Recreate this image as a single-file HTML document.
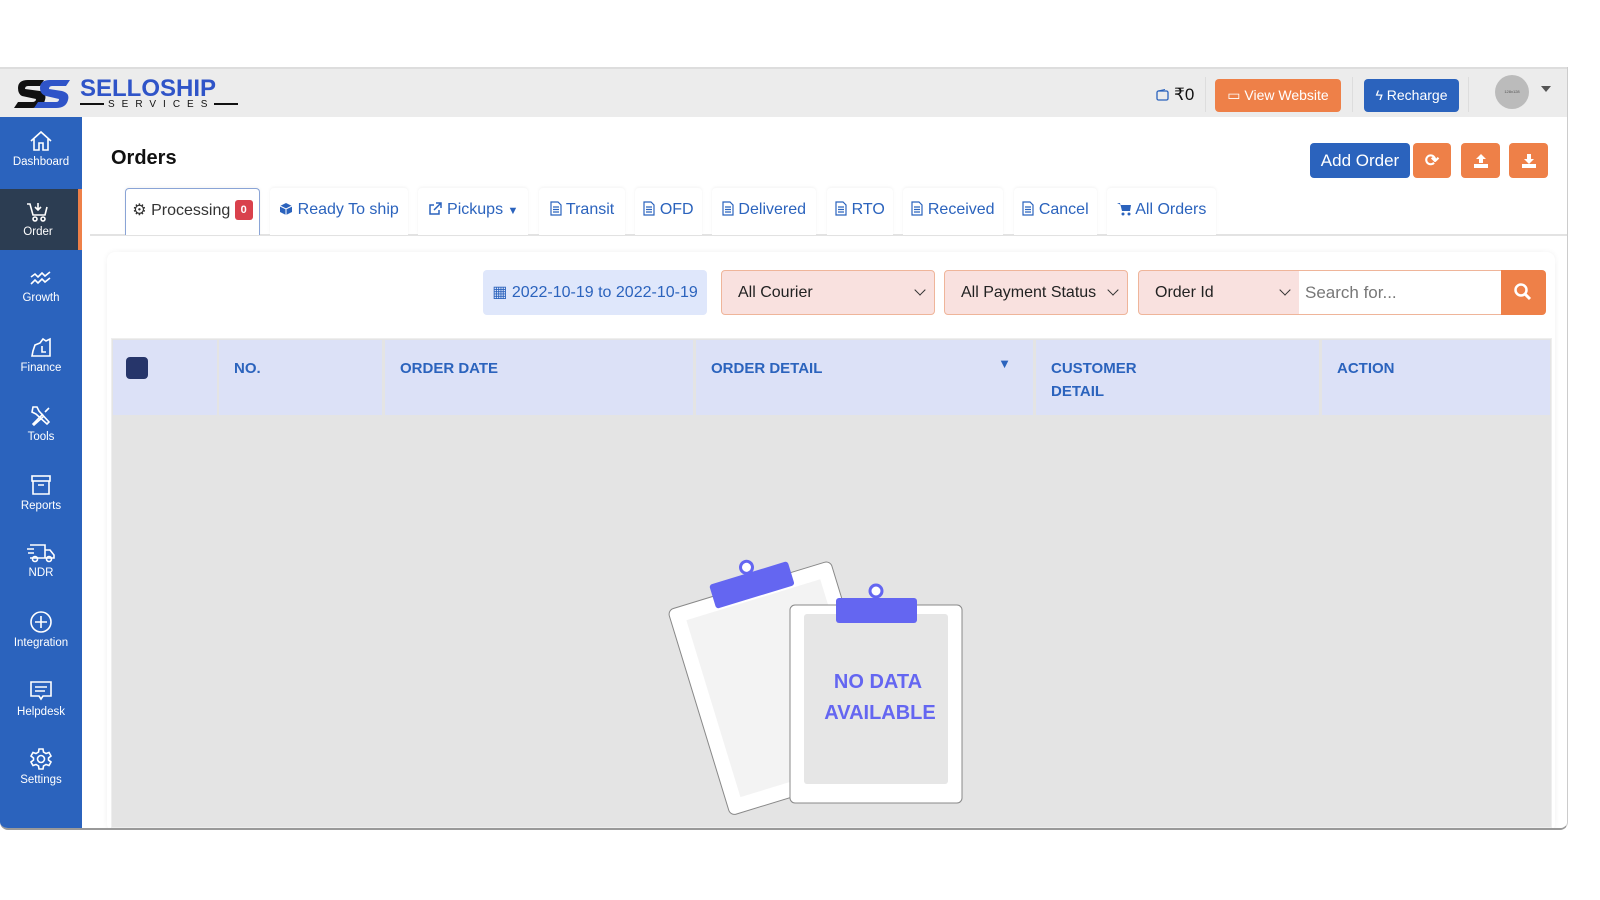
<!DOCTYPE html>
<html><head><meta charset="utf-8"><style>
*{box-sizing:border-box;margin:0;padding:0}
body{width:1600px;height:900px;background:#fff;font-family:"Liberation Sans",sans-serif;position:relative;overflow:hidden}
.app{position:absolute;left:0;top:67px;width:1568px;height:763px;background:#fff;border-bottom:2px solid #999;border-right:1px solid #ccc;border-radius:0 0 8px 8px;overflow:hidden}
.hdr{position:absolute;left:0;top:0;width:1568px;height:50px;background:#ececec;border-top:2px solid #ddd}
.side{position:absolute;left:0;top:50px;width:82px;height:713px;background:#2b63bd}
.si{position:absolute;left:0;width:82px;text-align:center;color:#fff;font-size:11.5px}
.si svg{display:block;margin:0 auto 3px}
.main{position:absolute;left:82px;top:50px;width:1486px;height:713px;background:#fff}
.tab{position:absolute;top:71px;height:47px;background:#fff;color:#2b63bd;font-size:16px;line-height:44px;text-align:center;border-radius:4px 4px 0 0;box-shadow:0 -1px 3px rgba(0,0,0,.05);white-space:nowrap}
.tab svg{vertical-align:-2px}
.btn{position:absolute;border-radius:4px;color:#fff;text-align:center}
.sel{position:absolute;top:270px;height:45px;background:#f9e1df;border:1px solid #efb59a;border-radius:4px;font-size:16px;line-height:43px;padding-left:16px;color:#222}
.sel:after{content:"";position:absolute;right:10px;top:15px;width:7px;height:7px;border-right:1.5px solid #333;border-bottom:1.5px solid #333;transform:rotate(45deg)}
.th{position:absolute;top:340px;height:75px;background:#dce1f7;color:#2b63bd;font-weight:bold;font-size:15px;padding:17px 0 0 15px;line-height:23px}
</style></head><body>
<svg width="0" height="0" style="position:absolute"><defs><symbol id="doc" viewBox="0 0 12 15"><path d="M1 1 H8 L11 4 V14 H1 Z M3 6 H9 M3 8.5 H9 M3 11 H9" fill="none" stroke="#2b63bd" stroke-width="1.2"/></symbol></defs></svg>
<div class="app">
 <div class="hdr">
  <svg style="position:absolute;left:14px;top:7px" width="58" height="36" viewBox="0 0 58 36"><path d="M4 12 Q4 4 14 4 L30 4 L26 10 L14 10 Q11 10 11 13 L26 15 Q33 17 31 24 Q29 32 18 32 L0 32 L4 26 L18 26 Q22 26 22 23 L8 20 Q4 18 4 12Z" fill="#111"/><path d="M26 12 Q26 4 36 4 L56 4 L52 10 L38 10 Q35 10 35 13 L48 15 Q56 17 54 24 Q52 32 42 32 L20 32 L24 26 L42 26 Q45 26 45 23 L32 20 Q26 18 26 12Z" fill="#2f54c8"/></svg>
  <div style="position:absolute;left:80px;top:6px;font:bold 24px 'Liberation Sans',sans-serif;color:#2f54c8">SELLOSHIP</div>
  <div style="position:absolute;left:80px;top:30px;font-size:10px;color:#111;letter-spacing:7px;white-space:nowrap"><span style="display:inline-block;width:24px;border-top:2px solid #111;vertical-align:middle;margin-right:4px"></span>SERVICES<span style="display:inline-block;width:24px;border-top:2px solid #111;vertical-align:middle"></span></div>
  <svg style="position:absolute;left:1156px;top:20px" width="13" height="12" viewBox="0 0 13 12"><rect x="1" y="2" width="11" height="9" rx="1.5" fill="none" stroke="#2b63bd" stroke-width="1.3"/><path d="M2 2 L9 0.5" stroke="#2b63bd"/></svg>
  <div style="position:absolute;left:1174px;top:16px;font-size:17px;color:#111">₹0</div>
  <div style="position:absolute;left:1205px;top:8px;height:35px;border-left:1px solid #ddd"></div>
  <div class="btn" style="left:1215px;top:10px;width:126px;height:33px;background:#ee8048;font-size:14px;line-height:33px">▭ View Website</div>
  <div style="position:absolute;left:1352px;top:8px;height:35px;border-left:1px solid #ddd"></div>
  <div class="btn" style="left:1364px;top:10px;width:95px;height:33px;background:#2b63bd;font-size:14px;line-height:33px">ϟ Recharge</div>
  <div style="position:absolute;left:1468px;top:8px;height:35px;border-left:1px solid #ddd"></div>
  <div style="position:absolute;left:1495px;top:6px;width:34px;height:34px;border-radius:50%;background:#bbb;font-size:4px;color:#555;text-align:center;line-height:34px">128x128</div>
  <div style="position:absolute;left:1541px;top:17px;border:5px solid transparent;border-top:6px solid #555"></div>
 </div>
 <div class="side">
  <div class="si" style="top:12px"><svg width="24" height="24" viewBox="0 0 24 24" fill="none" stroke="#fff" stroke-width="1.6"><path d="M2 12 L12 3 L22 12 M5 10 V21 H10 V14 H14 V21 H19 V10"/></svg>Dashboard</div>
  <div style="position:absolute;top:72px;left:0;width:82px;height:61px;background:#2c3d52;border-right:4px solid #ee8048"></div>
  <div class="si" style="top:84px;width:76px"><svg width="24" height="22" viewBox="0 0 24 22" fill="none" stroke="#fff" stroke-width="1.6"><path d="M1 3 H4 L7 14 H19 L21 6 M12 2 V9 M9 6 L12 9 L15 6"/><circle cx="9" cy="18" r="2"/><circle cx="17" cy="18" r="2"/></svg>Order</div>
  <div class="si" style="top:152px"><svg width="24" height="20" viewBox="0 0 24 20" fill="none" stroke="#fff" stroke-width="1.6"><path d="M2 8 L6 5 L9 8 L13 4 L16 7 L21 3 M2 15 L6 11 L9 14 L13 10 L16 13 L21 9"/></svg>Growth</div>
  <div class="si" style="top:218px"><svg width="24" height="24" viewBox="0 0 24 24" fill="none" stroke="#fff" stroke-width="1.6"><path d="M3 21 H21 V4 L17 6 L14 4 L11 8 L6 10 L4 16 Z M13 11 V17 H17"/></svg>Finance</div>
  <div class="si" style="top:287px"><svg width="24" height="24" viewBox="0 0 24 24" fill="none" stroke="#fff" stroke-width="1.6"><path d="M4 3 L8 3 L10 7 L20 18 L18 20 L7 10 L3 8 Z M20 4 L16 8 M14 10 L4 20 L5 21 L15 12"/></svg>Tools</div>
  <div class="si" style="top:356px"><svg width="24" height="24" viewBox="0 0 24 24" fill="none" stroke="#fff" stroke-width="1.6"><rect x="3" y="3" width="18" height="5"/><path d="M4 8 V21 H20 V8 M9 12 H15"/></svg>Reports</div>
  <div class="si" style="top:425px"><svg width="30" height="22" viewBox="0 0 30 22" fill="none" stroke="#fff" stroke-width="1.6"><path d="M4 3 H19 V16 H4 M19 8 H24 L28 13 V16 H19 M1 7 H8 M2 11 H8"/><circle cx="9" cy="17" r="2.5"/><circle cx="23" cy="17" r="2.5"/></svg>NDR</div>
  <div class="si" style="top:493px"><svg width="24" height="24" viewBox="0 0 24 24" fill="none" stroke="#fff" stroke-width="1.6"><circle cx="12" cy="12" r="10"/><path d="M12 6 V18 M6 12 H18"/></svg>Integration</div>
  <div class="si" style="top:562px"><svg width="24" height="24" viewBox="0 0 24 24" fill="none" stroke="#fff" stroke-width="1.6"><path d="M2 3 H22 V17 H14 L12 20 L10 17 H2 Z M6 8 H18 M6 12 H16"/></svg>Helpdesk</div>
  <div class="si" style="top:630px"><svg width="24" height="24" viewBox="0 0 24 24" fill="none" stroke="#fff" stroke-width="1.6"><circle cx="12" cy="12" r="3.5"/><path d="M10 2 H14 L14.5 5 L17 6.5 L20 5.5 L22 9 L19.5 11 V13 L22 15 L20 18.5 L17 17.5 L14.5 19 L14 22 H10 L9.5 19 L7 17.5 L4 18.5 L2 15 L4.5 13 V11 L2 9 L4 5.5 L7 6.5 L9.5 5 Z"/></svg>Settings</div>
 </div>
 <div class="main">
  <div style="position:absolute;left:29px;top:30px;font-weight:bold;font-size:20px;color:#111">Orders</div>
  <div class="btn" style="left:1228px;top:26px;width:100px;height:35px;background:#2b63bd;font-size:17px;line-height:35px">Add Order</div>
  <div class="btn" style="left:1331px;top:26px;width:38px;height:35px;background:#ee8048;font-size:17px;line-height:35px;font-weight:bold">⟳</div>
  <div class="btn" style="left:1379px;top:26px;width:39px;height:35px;background:#ee8048"><svg width="16" height="16" viewBox="0 0 16 16" style="margin-top:10px"><path d="M8 1 L13 6 H10 V10 H6 V6 H3Z M1 11 H15 V15 H1Z" fill="#fff"/></svg></div>
  <div class="btn" style="left:1427px;top:26px;width:39px;height:35px;background:#ee8048"><svg width="16" height="16" viewBox="0 0 16 16" style="margin-top:10px"><path d="M6 1 H10 V6 H13 L8 11 L3 6 H6Z M1 11 H15 V15 H1Z" fill="#fff"/></svg></div>
  <div style="position:absolute;left:8px;top:117px;width:1478px;border-top:2px solid #e3e3e3"></div>
  <div class="tab" style="left:43px;width:135px;border:1px solid #8aa4d6;border-bottom:none;color:#333">⚙ Processing <span style="display:inline-block;background:#d9414c;color:#fff;font-size:11px;font-weight:bold;line-height:20px;width:18px;border-radius:3px;vertical-align:2px">0</span></div>
  <div class="tab" style="left:188px;width:138px"><svg width="14" height="14" viewBox="0 0 14 14"><path d="M7 1 L13 4 V10 L7 13 L1 10 V4 Z" fill="#2b63bd"/><path d="M1 4 L7 7 L13 4 M7 7 V13" stroke="#fff" fill="none"/></svg> Ready To ship</div>
  <div class="tab" style="left:336px;width:110px"><svg width="15" height="14" viewBox="0 0 15 14" fill="none" stroke="#2b63bd" stroke-width="1.5"><path d="M6 3 H2 V12 H11 V8 M8 1 H13 V6 M13 1 L6 8"/></svg> Pickups <span style="font-size:11px">▼</span></div>
  <div class="tab" style="left:457px;width:86px"><svg width="12" height="15"><use href="#doc"/></svg> Transit</div>
  <div class="tab" style="left:553px;width:67px"><svg width="12" height="15"><use href="#doc"/></svg> OFD</div>
  <div class="tab" style="left:630px;width:104px"><svg width="12" height="15"><use href="#doc"/></svg> Delivered</div>
  <div class="tab" style="left:745px;width:66px"><svg width="12" height="15"><use href="#doc"/></svg> RTO</div>
  <div class="tab" style="left:821px;width:100px"><svg width="12" height="15"><use href="#doc"/></svg> Received</div>
  <div class="tab" style="left:932px;width:83px"><svg width="12" height="15"><use href="#doc"/></svg> Cancel</div>
  <div class="tab" style="left:1025px;width:109px"><svg width="15" height="14" viewBox="0 0 15 14"><path d="M0 1 H3 L5 9 H13 L14 3 H4" fill="#2b63bd"/><circle cx="6" cy="12" r="1.5" fill="#2b63bd"/><circle cx="12" cy="12" r="1.5" fill="#2b63bd"/></svg> All Orders</div>
  <div style="position:absolute;left:25px;top:135px;width:1448px;height:580px;background:#fff;border-radius:8px;box-shadow:0 0 6px rgba(0,0,0,.06)"></div>
 </div>
 <div style="position:absolute;left:483px;top:203px;width:224px;height:45px;background:#dfe7fb;border-radius:4px;color:#2b63bd;font-size:16px;line-height:45px;text-align:center">▦ 2022-10-19 to 2022-10-19</div>
</div>
<div class="sel" style="left:721px;width:214px">All Courier</div>
<div class="sel" style="left:944px;width:184px">All Payment Status</div>
<div class="sel" style="left:1138px;width:162px;border-radius:4px 0 0 4px">Order Id</div>
<div style="position:absolute;left:1299px;top:270px;width:203px;height:45px;border:1px solid #efb59a;border-left:none;background:#fff;font-size:17px;line-height:43px;padding-left:6px;color:#777">Search for...</div>
<div style="position:absolute;left:1501px;top:270px;width:45px;height:45px;background:#ee8048;border-radius:0 4px 4px 0"><svg width="20" height="20" viewBox="0 0 20 20" style="margin:12px"><circle cx="8" cy="8" r="5.5" fill="none" stroke="#fff" stroke-width="2.5"/><path d="M12 12 L17 17" stroke="#fff" stroke-width="3"/></svg></div>
<div style="position:absolute;left:111px;top:338px;width:1441px;height:490px;background:#e4e4e4;border:1px solid #eee"></div>
<div class="th" style="left:113px;width:104px"><div style="width:22px;height:22px;background:#26356a;border-radius:4px;margin-left:-2px"></div></div>
<div class="th" style="left:219px;width:163px">NO.</div>
<div class="th" style="left:385px;width:308px">ORDER DATE</div>
<div class="th" style="left:696px;width:337px">ORDER DETAIL<span style="position:absolute;right:22px;top:12px;font-size:13px">▼</span></div>
<div class="th" style="left:1036px;width:283px">CUSTOMER<br>DETAIL</div>
<div class="th" style="left:1322px;width:228px">ACTION</div>
<svg style="position:absolute;left:650px;top:530px" width="340" height="290" viewBox="650 530 340 290">
 <g transform="rotate(-17 780 670)"><rect x="690" y="580" width="170" height="215" rx="6" fill="#fff" stroke="#888" stroke-width="1"/><rect x="705" y="595" width="140" height="185" fill="#f3f3f3"/><rect x="737" y="568" width="82" height="25" rx="3" fill="#6466f1"/><circle cx="778" cy="562" r="6" fill="#fff" stroke="#6466f1" stroke-width="3"/></g>
 <rect x="790" y="605" width="172" height="198" rx="5" fill="#fff" stroke="#888" stroke-width="1"/>
 <rect x="804" y="614" width="144" height="170" rx="3" fill="#e6e6e6"/>
 <rect x="836" y="598" width="81" height="25" rx="3" fill="#6466f1"/>
 <circle cx="876" cy="591" r="6" fill="#fff" stroke="#6466f1" stroke-width="3"/>
 <text x="878" y="688" text-anchor="middle" font-family="Liberation Sans" font-weight="bold" font-size="20" fill="#6466f1">NO DATA</text>
 <text x="880" y="719" text-anchor="middle" font-family="Liberation Sans" font-weight="bold" font-size="20" fill="#6466f1">AVAILABLE</text>
</svg>
</body></html>
